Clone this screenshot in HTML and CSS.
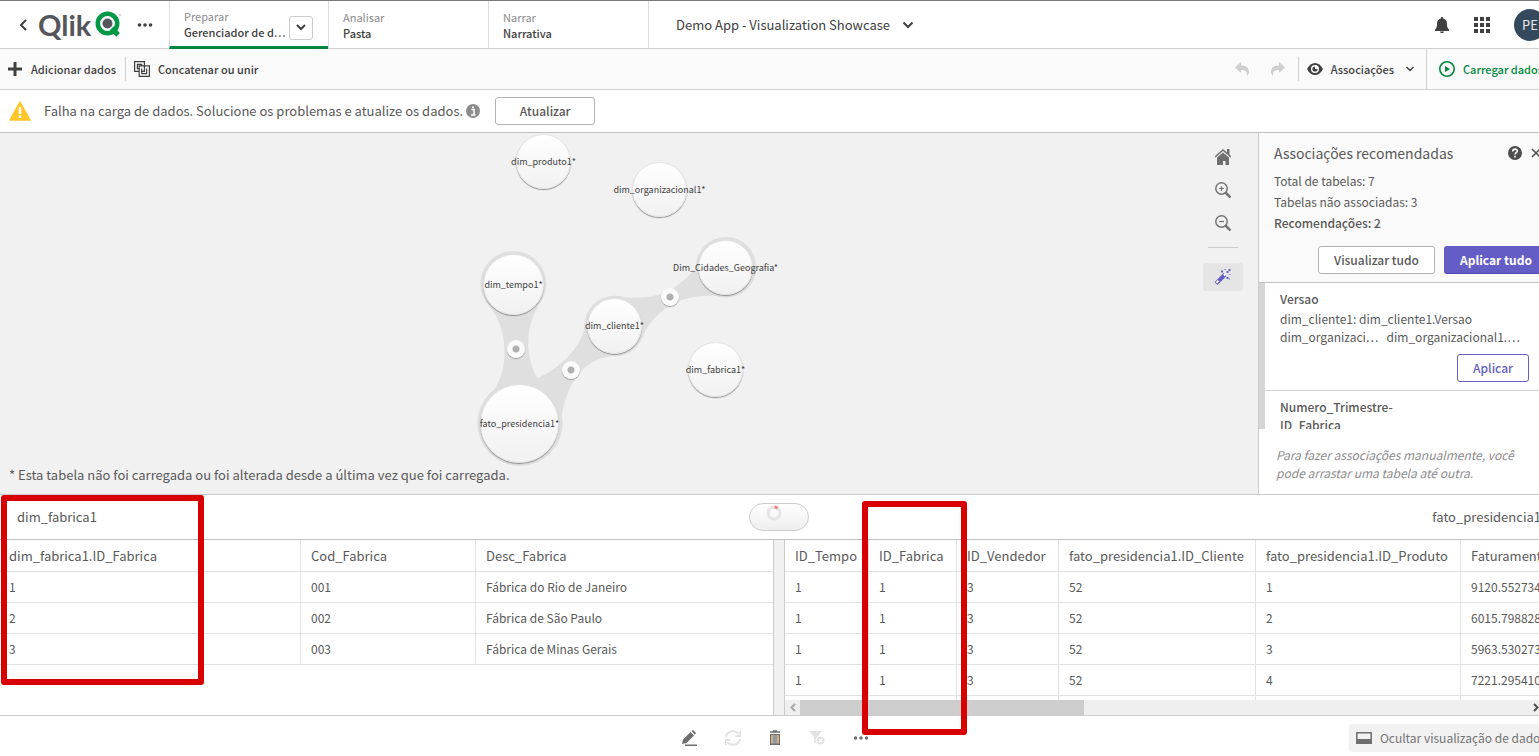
FILE: index.html
```
<!DOCTYPE html>
<html lang="pt-BR">
<head>
<meta charset="utf-8">
<title>Gerenciador de dados</title>
<link rel="stylesheet" href="styles.css">
</head>
<body>
<div class="app">
  <header class="topbar">
    <div class="brand">
      <button class="plain" aria-label="Voltar"><svg width="10" height="14" viewBox="0 0 10 14"><path d="M8 2 3 7l5 5" fill="none" stroke="#404040" stroke-width="2"/></svg></button>
      <a class="logo" href="#"><span>Qlik</span><svg width="27" height="27" viewBox="0 0 27 27"><circle cx="12.500" cy="12.500" r="9.700" fill="none" stroke="#009845" stroke-width="4.600"/><circle cx="12.500" cy="12.500" r="5" fill="#54565b"/><path d="m17 17 6 7" stroke="#009845" stroke-width="5"/><circle cx="25" cy="4" r="1" fill="none" stroke="#aaa" stroke-width=".5"/></svg></a>
      <button class="plain" aria-label="Mais"><svg width="16" height="4" viewBox="0 0 16 4" fill="#404040"><circle cx="2.500" cy="2" r="1.800"/><circle cx="8" cy="2" r="1.800"/><circle cx="13.500" cy="2" r="1.800"/></svg></button>
    </div>
    <nav class="tabs">
      <div class="tab active"><a href="#"><small>Preparar</small><b>Gerenciador de d…</b></a><button class="drop" aria-label="Abrir menu"><svg width="10" height="7" viewBox="0 0 10 7"><path d="m1 1 4 4 4-4" fill="none" stroke="#404040" stroke-width="2"/></svg></button></div>
      <div class="tab"><a href="#"><small>Analisar</small><b>Pasta</b></a></div>
      <div class="tab"><a href="#"><small>Narrar</small><b>Narrativa</b></a></div>
    </nav>
    <button class="plain appname">Demo App - Visualization Showcase <svg width="12" height="8" viewBox="0 0 12 8"><path d="m1.500 1.500 4.500 4.500 4.500-4.500" fill="none" stroke="#404040" stroke-width="2"/></svg></button>
    <div class="user">
      <button class="plain" aria-label="Notificações"><svg width="16" height="18" viewBox="0 0 16 18" fill="#404040"><path d="M8 1c.9 0 1.200.6 1.200 1.400C12 3 13 5 13 8c0 3 .5 4 2 5.500V15H1v-1.500C2.500 12 3 11 3 8c0-3 1-5 3.800-5.600C6.800 1.600 7.100 1 8 1zM6 15.500h4c0 2-4 2-4 0z"/></svg></button>
      <button class="plain" aria-label="Aplicativos"><svg width="16" height="16" viewBox="0 0 16 16" fill="#404040"><path d="M0 0h4v4H0zM6 0h4v4H6zM12 0h4v4h-4zM0 6h4v4H0zM6 6h4v4H6zM12 6h4v4h-4zM0 12h4v4H0zM6 12h4v4H6zM12 12h4v4h-4z"/></svg></button>
      <button class="avatar">PE</button>
    </div>
  </header>

  <div class="toolbar">
    <button class="plain add"><svg width="14" height="14" viewBox="0 0 14 14"><path d="M7 0v14M0 7h14" stroke="#404040" stroke-width="3"/></svg>Adicionar dados</button>
    <span class="sep"></span>
    <button class="plain concat"><svg width="16" height="16" viewBox="0 0 16 16" fill="none" stroke="#404040" stroke-width="1.200"><path d="M4.800 10.400H.6V.6h9.800V4.400M4.800 7.600H3.400V3.400h4.200V4.800M10.400 4.800h5v10.600H5.200v-5M5.200 10.400V4.800h5.200v5.600H7.600V7.600M12.600 7.600v5H7.800v-2.200"/></svg>Concatenar ou unir</button>
    <div class="tools">
      <button class="plain" aria-label="Desfazer" disabled><svg width="14" height="14" viewBox="0 0 14 14" fill="#cfcfcf"><path d="M0 5.500 6 0v3.500c6 0 8 3.500 8 6 0 2-1 3.500-2 4.500.5-4-1-6-6-6v3z"/></svg></button>
      <button class="plain" aria-label="Refazer" disabled><svg width="14" height="14" viewBox="0 0 14 14" fill="#cfcfcf"><path d="M14 5.500 8 0v3.500c-6 0-8 3.500-8 6 0 2 1 3.500 2 4.500-.5-4 1-6 6-6v3z"/></svg></button>
    </div>
    <span class="sep"></span>
    <button class="plain view"><svg width="16" height="12" viewBox="0 0 16 12"><path d="M0 6c2-4 5-6 8-6s6 2 8 6c-2 4-5 6-8 6s-6-2-8-6z" fill="#404040"/><circle cx="8" cy="6" r="4" fill="#fff"/><circle cx="8" cy="6" r="2.600" fill="#404040"/><path d="M8 6V3h3v3z" fill="#fff"/></svg>Associações<svg class="caret" width="8" height="6" viewBox="0 0 8 6"><path d="m.5 1 3.500 3.500L7.500 1" fill="none" stroke="#404040" stroke-width="1.500"/></svg></button>
    <button class="plain load"><svg width="16" height="16" viewBox="0 0 16 16"><circle cx="8" cy="8" r="7.200" fill="none" stroke="#00873d" stroke-width="1.600"/><path d="m6 5 5 3-5 3z" fill="#00873d"/></svg>Carregar dados</button>
  </div>

  <div class="notice">
    <svg width="22" height="20" viewBox="0 0 22 20"><path d="M11 1 21 19H1z" fill="#ffc629" stroke="#ffc629" stroke-width="1.500" stroke-linejoin="round"/><path d="M11 6v7M11 14.500v2.500" stroke="#fff" stroke-width="2.500"/></svg>
    <p>Falha na carga de dados. Solucione os problemas e atualize os dados.</p>
    <svg class="info" width="14" height="14" viewBox="0 0 14 14"><circle cx="7" cy="7" r="7" fill="#8c8c8c"/><path d="M5.500 5.500H8V11M5 11h4.500M6 3.200h2" stroke="#fff" stroke-width="1.500" fill="none"/></svg>
    <button class="btn">Atualizar</button>
  </div>

  <main class="work">
    <section class="canvas">
      <svg class="links" width="800" height="361"><g transform="translate(460 -3) scale(.3333)" fill="#dfdfdf">
        <circle cx="160" cy="462" r="99"/><circle cx="180" cy="880" r="128"/><circle cx="464" cy="588" r="91"/><circle cx="798" cy="412" r="91"/>
        <path d="M85 525C145 590 150 720 98 785L260 790 298 930C305 745 385 680 465 678L375 580C372 640 310 710 232 745 195 680 195 590 235 530z"/>
        <path d="M464 497C590 520 650 480 707 415L770 498C660 490 590 540 552 610z"/>
      </g></svg>
      <button class="node" style="left:516px;top:1px;width:55px;height:55px"><span>dim_produto1*</span></button>
      <button class="node" style="left:632px;top:29px;width:55px;height:55px"><span>dim_organizacional1*</span></button>
      <button class="node" style="left:698px;top:107px;width:55px;height:55px"><span>Dim_Cidades_Geografia*</span></button>
      <button class="node" style="left:483px;top:121px;width:61px;height:61px"><span>dim_tempo1*</span></button>
      <button class="node" style="left:587px;top:165px;width:55px;height:56px"><span>dim_cliente1*</span></button>
      <button class="node" style="left:688px;top:209px;width:55px;height:55px"><span>dim_fabrica1*</span></button>
      <button class="node" style="left:480px;top:251px;width:79px;height:79px"><span>fato_presidencia1*</span></button>
      <button class="key" aria-label="Associação" style="left:507px;top:207px"></button>
      <button class="key" aria-label="Associação" style="left:562px;top:228px"></button>
      <button class="key" aria-label="Associação" style="left:661px;top:155px"></button>
      <p class="foot">* Esta tabela não foi carregada ou foi alterada desde a última vez que foi carregada.</p>
      <div class="zoom">
        <button class="plain" aria-label="Início"><svg width="16" height="16" viewBox="0 0 16 16" fill="#6e6e6e"><path d="m8 3.500 6 5V16h-3.500v-4h-2.500v4H2V8.500z"/><path d="m0 8 8-7 8 7" fill="none" stroke="#6e6e6e" stroke-width="1.500"/><path d="M12 0h2.500v6L12 4z"/></svg></button>
        <button class="plain" aria-label="Ampliar"><svg width="16" height="16" viewBox="0 0 16 16" fill="none" stroke="#737373"><circle cx="6.500" cy="6.500" r="5.700" stroke-width="1.500"/><path d="m10.500 10.500 5 5" stroke-width="2.500"/><path d="M6.500 4v5M4 6.500h5" stroke-width="1.200"/></svg></button>
        <button class="plain" aria-label="Reduzir"><svg width="16" height="16" viewBox="0 0 16 16" fill="none" stroke="#737373"><circle cx="6.500" cy="6.500" r="5.700" stroke-width="1.500"/><path d="m10.500 10.500 5 5" stroke-width="2.500"/><path d="M4 6.500h5" stroke-width="1.200"/></svg></button>
        <hr>
        <button class="plain wand" aria-label="Recomendações"><svg width="16" height="16" viewBox="0 0 16 16"><path d="m1 14.500 9-9" stroke="#655dc6" stroke-width="4"/><path d="m1.500 13.800 2-2M9 6.500l1.500-1.500" stroke="#fff" stroke-width="2"/><path d="M6 1.500h2v2H6zM11.500 2h2V0h2v2h-2v2h-2zM9.500 0h1v1h-1zM14.500 5h1v1h-1zM11.500 8h2v2h-2zM14 9.500h1v1h-1z" fill="#655dc6"/></svg></button>
      </div>
    </section>
    <aside class="panel">
      <div class="summary">
        <div class="headrow"><h2>Associações recomendadas</h2>
          <button class="plain" aria-label="Ajuda"><svg width="14" height="14" viewBox="0 0 14 14"><circle cx="7" cy="7" r="7" fill="#4d4d4d"/><path d="M4.800 5.500C4.800 2.300 9.300 2.500 9.300 5 9.300 6.700 7 6.500 7 8.500M7 9.800v1.800" fill="none" stroke="#fff" stroke-width="1.600"/></svg></button>
          <button class="plain" aria-label="Fechar"><svg width="10" height="10" viewBox="0 0 10 10"><path d="m1 1 8 8M9 1 1 9" stroke="#4d4d4d" stroke-width="1.500"/></svg></button></div>
        <p>Total de tabelas: 7</p>
        <p>Tabelas não associadas: 3</p>
        <p><b>Recomendações: 2</b></p>
        <div class="actions"><button class="btn">Visualizar tudo</button><button class="btn primary">Aplicar tudo</button></div>
      </div>
      <div class="recs">
        <article class="rec"><h3>Versao</h3>
          <p>dim_cliente1: dim_cliente1.Versao</p>
          <p class="pair"><span>dim_organizaci…</span><span>dim_organizacional1.…</span></p>
          <button class="btn outline">Aplicar</button></article>
        <article class="rec"><h3>Numero_Trimestre-<br>ID_Fabrica</h3></article>
      </div>
      <p class="tip">Para fazer associações manualmente, você pode arrastar uma tabela até outra.</p>
    </aside>
  </main>

  <section class="preview">
    <div class="pvhead"><h2>dim_fabrica1</h2><button class="pill" aria-label="Associar"><svg width="16" height="16" viewBox="0 0 16 16" fill="none" stroke-width="3"><circle cx="8" cy="8" r="6" stroke="#e4e4e4"/><path d="M8.500 2a6 6 0 0 1 3 1.200" stroke="#ee8080"/></svg></button><h2>fato_presidencia1</h2></div>
    <div class="split">
      <div class="pane">
        <table class="left">
          <colgroup><col class="w301"><col class="w175"><col></colgroup>
          <thead><tr><th>dim_fabrica1.ID_Fabrica</th><th>Cod_Fabrica</th><th>Desc_Fabrica</th></tr></thead>
          <tbody>
            <tr><td>1</td><td>001</td><td>Fábrica do Rio de Janeiro</td></tr>
            <tr><td>2</td><td>002</td><td>Fábrica de São Paulo</td></tr>
            <tr><td>3</td><td>003</td><td>Fábrica de Minas Gerais</td></tr>
          </tbody>
        </table>
        <div class="mark mark-left"></div>
      </div>
      <div class="gutter"></div>
      <div class="pane">
        <div class="scroller">
        <table class="right">
          <colgroup><col class="w84"><col class="w88"><col class="w102"><col class="w197"><col class="w205"><col class="w205"></colgroup>
          <thead><tr><th>ID_Tempo</th><th>ID_Fabrica</th><th>ID_Vendedor</th><th>fato_presidencia1.ID_Cliente</th><th>fato_presidencia1.ID_Produto</th><th>Faturamento</th></tr></thead>
          <tbody>
            <tr><td>1</td><td>1</td><td>3</td><td>52</td><td>1</td><td>9120.552734</td></tr>
            <tr><td>1</td><td>1</td><td>3</td><td>52</td><td>2</td><td>6015.798828</td></tr>
            <tr><td>1</td><td>1</td><td>3</td><td>52</td><td>3</td><td>5963.530273</td></tr>
            <tr><td>1</td><td>1</td><td>3</td><td>52</td><td>4</td><td>7221.295410</td></tr>
            <tr><td></td><td></td><td></td><td></td><td></td><td></td></tr>
          </tbody>
        </table>
        </div>
        <div class="hscroll"><svg width="15" height="15" viewBox="0 0 15 15"><path d="M10 4 6.500 7.500 10 11" fill="none" stroke="#a8a8a8" stroke-width="2"/></svg><div class="track"><div class="thumb"></div></div><svg width="15" height="15" viewBox="0 0 15 15"><path d="m6 4 3.500 3.500L6 11" fill="none" stroke="#505050" stroke-width="2"/></svg></div>
        <div class="mark mark-right"></div>
      </div>
    </div>
  </section>

  <footer class="bottom">
    <div class="acts">
      <button class="plain" aria-label="Editar"><svg width="16" height="16" viewBox="0 0 16 16" fill="#6e6e6e"><path d="m1 14 1-4.500L9.500 2 13 5.500 5.500 13zM10.500 1 12 0l3 3-1.200 1.700zM4 14.500h12V16H4z"/></svg></button>
      <button class="plain" aria-label="Atualizar tabela" disabled><svg width="16" height="16" viewBox="0 0 16 16" fill="none" stroke="#e2e2e2" stroke-width="2"><path d="M1 7a7 7 0 0 1 12.500-3M15 9a7 7 0 0 1-12.500 3M15.500 1v5h-5M.5 15v-5h5"/></svg></button>
      <button class="plain" aria-label="Excluir"><svg width="12" height="16" viewBox="0 0 12 16"><path d="M1 2h10M4 1h4" stroke="#6e6e6e" stroke-width="1.500"/><path d="M1 4h10v11H1z" fill="#6e6e6e"/><path d="M3 5v8.500M9 5v8.500" stroke="#f3c292" stroke-width="1.500"/><path d="M5 5v8.500M7 5v8.500" stroke="#b8c7d5"/></svg></button>
      <button class="plain" aria-label="Limpar filtro" disabled><svg width="16" height="14" viewBox="0 0 16 14"><path d="M0 0h13L8 6v7l-3-2V6z" fill="#e2e2e2"/><circle cx="11.500" cy="9.500" r="4.500" fill="#e2e2e2" stroke="#fff"/><path d="m9.800 7.800 3.400 3.400M13.200 7.800l-3.400 3.400" stroke="#fff" stroke-width="1.300"/></svg></button>
      <button class="plain" aria-label="Mais opções"><svg width="16" height="4" viewBox="0 0 16 4" fill="#6e6e6e"><circle cx="2.500" cy="2" r="1.700"/><circle cx="8" cy="2" r="1.700"/><circle cx="13.500" cy="2" r="1.700"/></svg></button>
    </div>
    <button class="hide"><svg width="16" height="12" viewBox="0 0 16 12"><path d="M.8.8h14.400v10.400H.8z" fill="#f2f2f2" stroke="#6e6e6e" stroke-width="1.500"/><path d="M1 7h14v4H1z" fill="#6e6e6e"/></svg>Ocultar visualização de dados</button>
  </footer>
</div>
</body>
</html>
```
FILE: styles.css
```
* { box-sizing: border-box; }
body {
  margin: 0;
  height: 100vh;
  overflow: hidden;
  background: #fff;
  color: #595959;
  font: 400 13px/18px "Noto Sans CJK SC", "Noto Sans", sans-serif;
}
h2, h3, p { margin: 0; font-size: 13px; line-height: 18px; }
h2, h3, b { font-weight: 500; }
button { font: inherit; color: inherit; cursor: pointer; }
a { color: inherit; text-decoration: none; }
svg { display: block; flex: none; }
.plain { display: flex; align-items: center; padding: 0; border: 0; background: none; white-space: nowrap; }
.app { display: flex; flex-direction: column; width: calc(100% + 19px); height: 100vh; }

.topbar { display: flex; height: 49px; border-top: 1px solid #777; border-bottom: 1px solid #d0d0d0; color: #404040; flex: none; }
.brand { display: flex; align-items: center; width: 169px; padding-left: 18px; }
.logo { display: flex; align-items: center; gap: 4px; margin: 0 15px 0 10px; }
.logo span { font: 700 29px/32px Lato, sans-serif; color: #54565b; }
.tabs { display: flex; }
.tab { display: flex; align-items: center; justify-content: space-between; width: 160px; padding: 0 16px 0 14px; border-left: 1px solid #dcdcdc; }
.tab:last-child { width: 161px; border-right: 1px solid #dcdcdc; }
.tab small, .tab b { display: block; font-size: 11px; line-height: 16px; }
.tab small { color: #8c8c8c; }
.tab.active { width: 159px; height: 48px; padding-right: 15px; border-bottom: 3px solid #00873d; }
.drop { display: flex; align-items: center; justify-content: center; width: 24px; height: 24px; margin-top: 8px; padding: 0; background: #fff; border: 1px solid #ccc; border-radius: 3px; }
.appname { gap: 12px; margin-left: 27px; }
.user { display: flex; align-items: center; gap: 24px; margin-left: auto; padding-right: 12px; }
.avatar { width: 32px; height: 32px; padding: 0; border: 0; border-radius: 50%; background: #34495e; color: #e8e8e8; }

.toolbar { display: flex; align-items: center; height: 41px; background: #fafafa; border-bottom: 1px solid #d0d0d0; color: #404040; font-size: 11px; font-weight: 500; flex: none; }
.sep { width: 1px; height: 24px; background: #d0d0d0; }
.add { gap: 9px; padding: 0 9px 0 8px; }
.concat { gap: 8px; padding-left: 8px; }
.tools { display: flex; gap: 22px; margin-left: auto; padding-right: 13px; }
.view { gap: 8px; padding: 0 12px 0 8px; }
.caret { margin-left: 4px; }
.load { align-self: stretch; gap: 8px; width: 132px; padding-left: 12px; border-left: 1px solid #d0d0d0; color: #00873d; }

.notice { display: flex; align-items: center; height: 43px; padding-left: 9px; border-bottom: 1px solid #bfbfbf; flex: none; }
.notice p { margin-left: 13px; }
.info { margin: 0 15px 0 3px; }
.btn { height: 28px; padding: 0 15px; border: 1px solid #b3b3b3; border-radius: 3px; background: #fff; font-size: 12px; font-weight: 500; white-space: nowrap; }
.notice .btn { width: 100px; }
.primary { background: #655dc6; border-color: #655dc6; border-bottom-color: #5148b5; color: #fff; font-weight: 700; }
.outline { border-color: #655dc6; color: #655dc6; }

.work { display: flex; flex: 1; min-height: 0; border-bottom: 1px solid #ccc; }
.canvas { position: relative; flex: 1; background: #f1f1f1; overflow: hidden; }
.links { position: absolute; left: 0; top: 0; }
.node { position: absolute; display: flex; align-items: center; justify-content: center; padding: 0; border: 1px solid #e4e4e4; border-radius: 50%; background: linear-gradient(#fff, #f1f1f1); box-shadow: 0 1px 1px #8c8c8c; font-size: 9px; line-height: 12px; color: #404040; }
.node span { flex: none; }
.key { position: absolute; width: 18px; height: 18px; padding: 0; border: 0; border-radius: 50%; background: radial-gradient(circle, #b0b0b0 3px, #fafafa 4px); box-shadow: 0 1px 1px #999; }
.foot { position: absolute; left: 9px; bottom: 10px; }
.zoom { position: absolute; right: 15px; top: 16px; display: flex; flex-direction: column; align-items: center; gap: 17px; width: 40px; }
.zoom hr { width: 30px; height: 1px; margin: -1px 0 0; border: 0; background: #ccc; }
.wand { justify-content: center; width: 40px; height: 28px; margin-top: -2px; border-radius: 3px; background: #e5e5e5; }
.panel { display: flex; flex-direction: column; width: 300px; border-left: 1px solid #ccc; }
.summary { height: 150px; padding: 11px 10px 0 15px; background: #fafafa; border-bottom: 1px solid #bfbfbf; flex: none; }
.summary p { line-height: 21px; font-size: 12px; }
.headrow { display: flex; align-items: center; margin-bottom: 8px; }
.headrow h2 { flex: 1; font-size: 14px; font-weight: 400; }
.headrow .plain:nth-child(2) { margin-right: 9px; }
.headrow .plain:last-child { margin-right: 7px; }
.actions { display: flex; justify-content: flex-end; gap: 9px; margin-top: 13px; }
.recs { flex: none; height: 146px; overflow: hidden; border-left: 6px solid #d6d6d6; }
.rec { display: flex; flex-direction: column; padding: 7px 29px 8px 15px; border-bottom: 1px solid #d0d0d0; }
.rec h3, .rec p { font-size: 12px; white-space: nowrap; }
.rec h3:not(:only-child) { margin-bottom: 2px; }
.pair { display: flex; gap: 8px; }
.rec .btn { align-self: flex-end; margin-top: 8px; }
.tip { padding: 17px 24px 0 17px; font-size: 12px; font-style: italic; color: #8c8c8c; }

.preview { flex: none; }
.pvhead { display: grid; grid-template-columns: 1fr 60px 1fr; align-items: center; height: 45px; padding: 0 17px; border-bottom: 1px solid #bfbfbf; }
.pvhead h2 { font-weight: 400; }
.pvhead h2:last-child { text-align: right; }
.pill { height: 28px; padding: 0 0 8px 16px; border: 1px solid #ccc; border-radius: 14px; background: linear-gradient(#fff, #eee); }
.split { display: flex; height: 176px; border-bottom: 1px solid #ccc; }
.pane { position: relative; flex: 1; min-width: 0; }
.gutter { width: 12px; background: #f1f1f1; border: solid #ccc; border-width: 0 1px; }
.scroller { height: 160px; overflow: hidden; }
table { table-layout: fixed; border-collapse: separate; border-spacing: 0; }
.left { width: 100%; }
.right { width: 881px; }
.w301 { width: 301px; }
.w175 { width: 175px; }
.w84 { width: 84px; }
.w88 { width: 88px; }
.w102 { width: 102px; }
.w197 { width: 197px; }
.w205 { width: 205px; }
th, td { height: 31px; padding: 0 0 0 10px; border: solid #e2e2e2; border-width: 0 1px 1px 0; text-align: left; font-size: 12px; font-weight: 400; white-space: nowrap; }
th { height: 32px; font-size: 13px; }
.left th:last-child, .left td:last-child { border-right: 0; }
.left th:first-child, .left td:first-child { padding-left: 9px; }
.hscroll { display: flex; height: 15px; margin-right: 15px; background: #efefef; }
.track { flex: 1; }
.thumb { width: 39%; height: 15px; background: #cdcdcd; }
.mark { position: absolute; border: 6px solid #d80000; border-radius: 3px; pointer-events: none; }
.mark-left { left: 1px; top: -45px; width: 203px; height: 190px; }
.mark-right { left: 77px; top: -39px; width: 105px; height: 234px; }

.bottom { display: flex; align-items: center; justify-content: center; position: relative; height: 40px; flex: none; padding-top: 4px; }
.acts { display: flex; align-items: center; gap: 28px; margin-right: 8px; }
.hide { position: absolute; right: 4px; top: 8px; display: flex; align-items: center; gap: 8px; height: 28px; padding: 0 8px 0 7px; border: 0; border-radius: 3px; background: #f2f2f2; color: #737373; font-size: 12px; white-space: nowrap; }
```
